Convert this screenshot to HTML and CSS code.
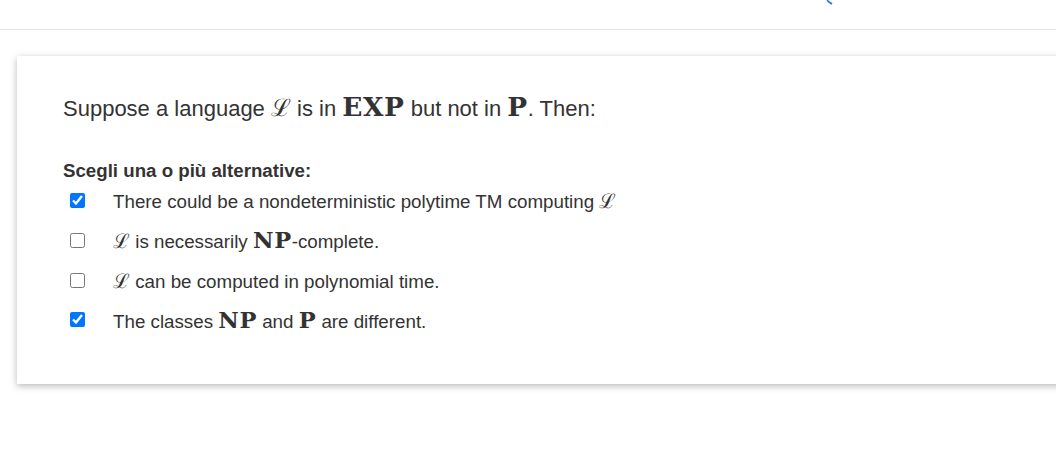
FILE: index.html
```html
<!DOCTYPE html>
<html>
<head>
<meta charset="utf-8">
<link rel="stylesheet" href="styles.css">
</head>
<body>
<header class="topbar">
  <svg class="topicon" width="10" height="6" viewBox="0 0 10 6"><path d="M2 -4 A4 4 0 0 0 3 2 L6 4" fill="none" stroke="#1a73e8" stroke-width="1.6"/></svg>
</header>
<main class="card">
  <p class="question">Suppose a language <span class="cal">ℒ</span> is in <span class="bf">EXP</span> but not in <span class="bf">P</span>. Then:</p>
  <div class="prompt">Scegli una o più alternative:</div>
  <div class="options">
    <label class="option"><input type="checkbox" checked><span>There could be a nondeterministic polytime TM computing <span class="cal">ℒ</span></span></label>
    <label class="option"><input type="checkbox"><span><span class="cal">ℒ</span> is necessarily <span class="bf">NP</span>-complete.</span></label>
    <label class="option"><input type="checkbox"><span><span class="cal">ℒ</span> can be computed in polynomial time.</span></label>
    <label class="option"><input type="checkbox" checked><span>The classes <span class="bf">NP</span> and <span class="bf">P</span> are different.</span></label>
  </div>
</main>
</body>
</html>
```
FILE: styles.css
```css
html {
  overflow: hidden;
}
html, body {
  margin: 0;
  padding: 0;
  background: #fff;
}
body {
  font-family: "Liberation Sans", Arial, sans-serif;
  color: #333;
  padding-bottom: 89px;
}
.topbar {
  height: 29px;
  border-bottom: 1px solid #e3e3e3;
  display: flex;
  justify-content: flex-end;
  align-items: flex-start;
}
.topicon {
  margin-right: 220px;
  display: block;
}
.card {
  margin: 26px -40px 0 17px;
  height: 328px;
  box-sizing: border-box;
  padding: 36px 0 0 46px;
  background: #fff;
  box-shadow: 0 2px 7px rgba(0,0,0,0.28);
}
.question {
  margin: 0;
  font-size: 22px;
  line-height: 30px;
}
.cal {
  font-family: "DejaVu Serif", serif;
  color: #333;
}
.question .cal { font-size: 24px; }
.bf {
  font-family: "DejaVu Serif", serif;
  font-weight: bold;
  font-size: 1.2em;
  letter-spacing: 0.6px;
}
.prompt {
  margin-top: 35px;
  font-weight: bold;
  font-size: 18.7px;
  line-height: 24px;
}
.options {
  margin-top: 2px;
  display: flex;
  flex-direction: column;
}
.option {
  display: flex;
  align-items: center;
  height: 39.7px;
  font-size: 18.75px;
}
.option:first-child { margin-top: -4px; }
.option input {
  margin: 0 28px 0 7px;
  width: 15px;
  height: 15px;
  accent-color: #0075ff;
}
.option .cal { font-size: 20px; }
```
